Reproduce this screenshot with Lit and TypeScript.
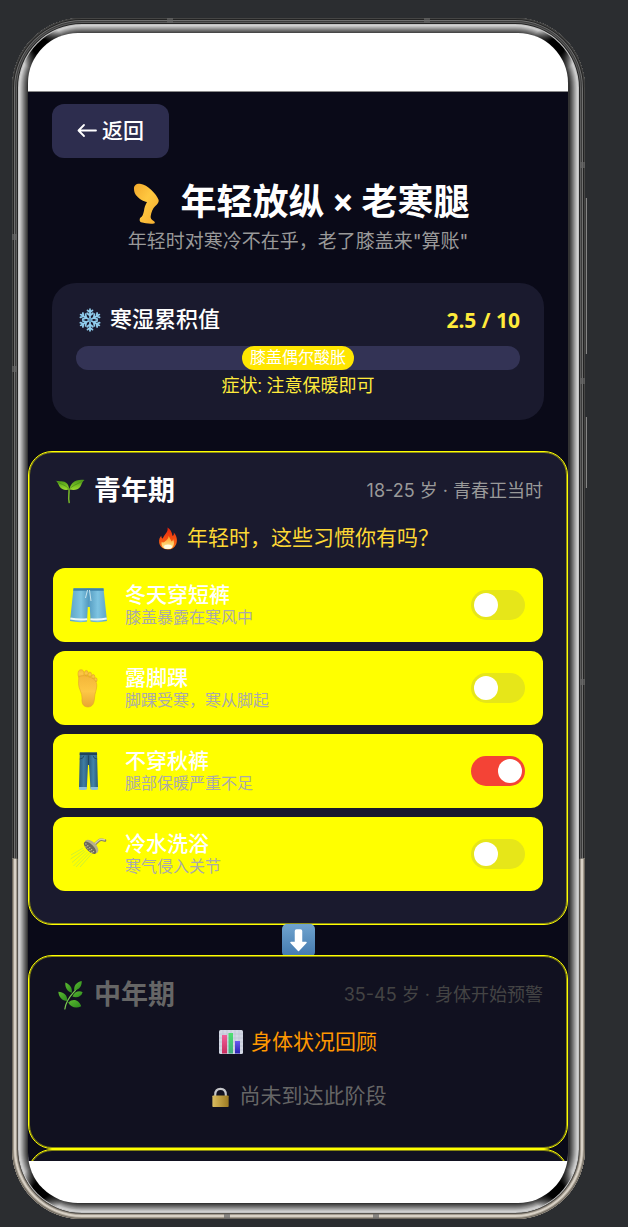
import { LitElement, html, css, svg } from "lit";
import { customElement, property, state } from "lit/decorators.js";

/* ---------- Pictograms ---------- */

const leg = svg`
  <svg class="i-leg" viewBox="18 33 138 126" aria-hidden="true">
    <defs><linearGradient id="lg" x1="0" y1="0" x2="1" y2="1"><stop offset="0" stop-color="#f3a92c"/><stop offset=".45" stop-color="#ffc840"/><stop offset="1" stop-color="#f5ac2f"/></linearGradient></defs>
    <path fill="url(#lg)" d="M42 54C41 43 49 37 60 38C72 39 84 47 94 57C104 67 113 78 116 87C117 94 112 100 106 105C98 112 94 124 92 136C91 143 95 146 101 150C106 153 106 158 99 158C88 159 74 157 63 154C58 152 58 143 61 140C67 137 70 129 72 119C73 110 76 102 81 93C71 92 58 84 51 76C45 70 42 62 42 54Z"/>
  </svg>`;

const snow = svg`
  <svg class="i-snow" viewBox="0 0 24 26" aria-hidden="true">
    <g fill="none" stroke="#8fcdec" stroke-width="1.900" stroke-linecap="round">
      ${[0, 60, 120, 180, 240, 300].map(
        (a) => svg`<path transform="rotate(${a} 12 13)" d="M12 11V1.300M12 4.800L9.300 2.500M12 4.800L14.700 2.500M12 8.300L8.900 5.700M12 8.300L15.100 5.700"/>`
      )}
    </g>
    <circle cx="12" cy="13" r="1.600" fill="#5c9fc4"/>
  </svg>`;

const sprout = svg`
  <svg class="i-head" viewBox="0 0 30 28" aria-hidden="true">
    <defs><linearGradient id="sp" x1="0" y1="0" x2="0" y2="1"><stop offset="0" stop-color="#4b9618"/><stop offset="1" stop-color="#9bdb2e"/></linearGradient></defs>
    <path fill="none" stroke="#78b92a" stroke-width="1.500" stroke-linecap="round" d="M14 12C14.500 17 12.800 20 14.200 25.500"/>
    <path fill="url(#sp)" d="M.5 3.500C4 5 9 3 12 6.500C13.500 8.300 14 10 14 12.500C10 13.500 6.500 12.500 4.500 9.500C3 7 3 5 .5 3.500Z"/>
    <path fill="url(#sp)" d="M29.500 3C25 2.500 20.500 3 17.500 6C15.800 7.800 14.800 10 14.500 12.500C19 13.500 23 13 25.300 9.800C26.800 7.500 27 4.500 29.500 3Z"/>
    <path fill="none" stroke="#3c8513" stroke-width=".6" d="M3 5.500C7 7.500 11 8 14 12.500C17 8.500 21.500 7.500 27 4.500"/>
  </svg>`;

const herb = svg`
  <svg class="i-head" viewBox="0 0 30 30" aria-hidden="true">
    <defs><linearGradient id="hb" x1="0" y1="0" x2="1" y2="1"><stop offset="0" stop-color="#5dbb32"/><stop offset="1" stop-color="#2b8a1c"/></linearGradient></defs>
    <path fill="none" stroke="#7ccb52" stroke-width="1.300" stroke-linecap="round" d="M9.500 30C10.500 23 14 17.500 19 12C21 9.500 23 7.500 25.500 3"/>
    <g fill="url(#hb)">
      <path d="M2.500 11.500C8 12 12.500 15 12 21.500C6.500 21 3 17.500 2.500 11.500Z"/>
      <path d="M10 1.500C15 3.500 17.500 7 17 12.500C12.500 11.500 9.500 7 10 1.500Z"/>
      <path d="M27.500 0C28 5 25 9.500 19.500 10C19 5 22 1 27.500 0Z"/>
      <path d="M28.500 12C25 9.500 19.500 11.500 17.500 16.500C22 18.500 27 17 28.500 12Z"/>
      <path d="M27 27C25 21 19 17.500 13 23C16 28.500 22 30 27 27Z"/>
    </g>
  </svg>`;

const flame = svg`
  <svg class="i-small" viewBox="0 0 22 24" aria-hidden="true">
    <defs>
      <linearGradient id="f1" x1="0" y1="0" x2="0" y2="1"><stop offset="0" stop-color="#e6230c"/><stop offset="1" stop-color="#ff7a18"/></linearGradient>
      <linearGradient id="f2" x1="0" y1="0" x2="0" y2="1"><stop offset="0" stop-color="#ff9a1f"/><stop offset="1" stop-color="#fff3a0"/></linearGradient>
    </defs>
    <path fill="url(#f1)" d="M10.500 .5C14.500 3 15.200 6.500 15.800 9.500C17 9 17.300 7.500 17 5.800C20 9 21.300 14 19.500 18C18 21.800 14.800 23.500 11 23.500C6.500 23.500 2.500 21 1.800 16.500C1.300 13 2.500 10.500 4 9C4 10.500 4.500 11.500 5.500 12C7 8 11.500 5.500 10.500 .5Z"/>
    <path fill="url(#f2)" d="M11.500 9.500C13 11.500 13.500 13 14.800 15C15.800 14.500 16.300 13.500 16.300 12.500C17.800 15.500 17.500 18.500 15.800 21C12.500 23.800 8 23.500 5.500 21C4 19 4 17 4.500 15.500C5.500 16.500 6.500 16 7.500 15.500C9 14 11.500 13 11.500 9.500Z"/>
    <ellipse cx="11" cy="20.500" rx="4.200" ry="2.300" fill="#fffbe0"/>
  </svg>`;

const chart = svg`
  <svg class="i-text" viewBox="0 0 24 24" aria-hidden="true">
    <defs>
      <linearGradient id="c1" x1="0" y1="0" x2="0" y2="1"><stop offset="0" stop-color="#f0609b"/><stop offset="1" stop-color="#c82c5c"/></linearGradient>
      <linearGradient id="c2" x1="0" y1="0" x2="0" y2="1"><stop offset="0" stop-color="#4fe070"/><stop offset="1" stop-color="#3fae7c"/></linearGradient>
      <linearGradient id="c3" x1="0" y1="0" x2="0" y2="1"><stop offset="0" stop-color="#6a5af0"/><stop offset="1" stop-color="#2a22b0"/></linearGradient>
    </defs>
    <rect width="24" height="24" rx="1.500" fill="#d3d8e4"/>
    <path stroke="#b9c1d2" stroke-width=".6" d="M0 4H24M0 8H24M0 12H24M0 16H24M0 20H24M4 0V24M8 0V24M12 0V24M16 0V24M20 0V24"/>
    <rect x="3" y="5" width="5" height="18.500" fill="url(#c1)"/><rect x="9.500" y="3" width="4.500" height="20.500" fill="url(#c2)"/><rect x="16" y="11" width="5" height="12.500" fill="url(#c3)"/>
  </svg>`;

const lock = svg`
  <svg class="i-small" viewBox="0 0 22 24" aria-hidden="true">
    <defs><linearGradient id="lk"><stop offset="0" stop-color="#d9bd62"/><stop offset=".3" stop-color="#c9a94b"/><stop offset="1" stop-color="#9c7a22"/></linearGradient></defs>
    <path fill="none" stroke="#c5c6c9" stroke-width="2.200" d="M5 13V10C5 6 7 4 10.500 4S16 6 16 10V13"/>
    <rect x="2" y="11" width="17" height="12" rx=".8" fill="url(#lk)"/>
  </svg>`;

const shorts = svg`
  <svg viewBox="0 0 36 36" aria-hidden="true">
    <defs><linearGradient id="sh"><stop offset="0" stop-color="#5fa6c6"/><stop offset=".3" stop-color="#7ec4e2"/><stop offset=".5" stop-color="#559bc0"/><stop offset=".75" stop-color="#7ec4e2"/><stop offset="1" stop-color="#5fa6c6"/></linearGradient></defs>
    <path fill="url(#sh)" d="M2.500 1.500H32.500L36 34Q28 36 19.500 34.500L18.800 20L16.800 20L16 34.500Q8 36 -1 34Z"/>
    <path fill="#3f83aa" d="M2.500 1.200H32.500L32.800 3.700H2.200Z"/>
    <path fill="none" stroke="#eef8f4" stroke-width="2" d="M-.7 31.500Q8 33.300 16.200 32.200M19.400 32.200Q28 33.300 35.700 31.500"/>
    <path fill="none" stroke="#d4ecf2" stroke-width=".9" d="M16.500 3L14.500 11M18.500 3L20 14"/>
  </svg>`;

const foot = svg`
  <svg viewBox="0 0 36 36" aria-hidden="true">
    <defs><linearGradient id="ft" x1="0" y1="0" x2="0" y2="1"><stop offset="0" stop-color="#f4b63a"/><stop offset=".5" stop-color="#fdc746"/><stop offset="1" stop-color="#e8a632"/></linearGradient></defs>
    <g fill="url(#ft)" stroke="#dc9a2a" stroke-width=".5">
      <ellipse cx="10" cy="4" rx="3" ry="4.300"/><ellipse cx="15.300" cy="3.400" rx="1.900" ry="3"/><ellipse cx="18.900" cy="4.700" rx="1.700" ry="2.700"/><ellipse cx="22.200" cy="6.800" rx="1.600" ry="2.400"/><ellipse cx="24.700" cy="9.800" rx="1.400" ry="2.100"/>
      <path d="M7.800 7C10 5.500 14 5 18 7C22 8 26 10.500 25.800 16C25.500 20.500 23.800 23 23.500 28C23.300 33 21.500 37 17 37C12 37 10.500 33 11 28.500C11.500 23 7.500 19 7.500 13.500Z"/>
    </g>
  </svg>`;

const jeans = svg`
  <svg viewBox="0 0 36 36" aria-hidden="true">
    <defs><linearGradient id="jn"><stop offset="0" stop-color="#2b5b7b"/><stop offset=".25" stop-color="#3f7da3"/><stop offset=".5" stop-color="#2b5b7b"/><stop offset=".75" stop-color="#4384aa"/><stop offset="1" stop-color="#2b5b7b"/></linearGradient></defs>
    <path fill="url(#jn)" d="M8.800 -.5H26L27 35.500H19.500L18 12H17L15.800 35.500H8Z"/>
    <path fill="#1f435d" d="M8.800 -.5H26L26.100 2H8.700Z"/>
    <path fill="#8ec0d8" d="M8 34H15.900L15.800 36.500Q12 37.500 8 36.500ZM19.400 34H27V36.500Q23 37.500 19.500 36.500Z"/>
    <path fill="none" stroke="#1f435d" stroke-width=".8" d="M8.700 6Q12.500 6 13 2.500M26.200 6Q22.500 6 22 2.500M17.500 2.500V12"/>
  </svg>`;

const shower = svg`
  <svg viewBox="0 0 36 36" aria-hidden="true">
    <path fill="none" stroke="#c2ec3c" stroke-width=".8" d="M12 12L0 19M13 14L-.5 23M14.500 15L1 26.500M16.500 16L2.500 30M18.500 17L5 31M20.500 18L9 31"/>
    <path fill="none" stroke="#857f60" stroke-width="2.600" stroke-linecap="round" stroke-linejoin="round" d="M22.500 9.500L28 4.500Q29.500 3 34 4.500"/>
    <path fill="none" stroke="#d5cfae" stroke-width="1.500" stroke-linecap="round" d="M23 8.500L28 4Q29.500 2.600 33.500 3.800"/>
    <ellipse cx="20.500" cy="10.500" rx="8.500" ry="4.600" transform="rotate(45 20.500 10.500)" fill="#b5af8c"/>
    <ellipse cx="19" cy="11.800" rx="8" ry="3.500" transform="rotate(45 19 11.800)" fill="#6b685a"/>
    <path stroke="#c9c49c" stroke-width="1.200" stroke-dasharray="1.200 1.500" d="M14.500 7.500L24 17M14.500 10.500L21.500 17"/>
  </svg>`;

const downArrow = svg`
  <svg class="i-arrow" viewBox="0 0 33 33" aria-hidden="true">
    <defs><linearGradient id="ar" x1="0" y1="0" x2="0" y2="1"><stop offset="0" stop-color="#70a4cf"/><stop offset="1" stop-color="#4379ae"/></linearGradient></defs>
    <rect width="33" height="33" rx="5" fill="url(#ar)"/>
    <path fill="#fff" stroke="#fff" stroke-width="1.500" stroke-linejoin="round" d="M13.500 7Q13.500 6 14.500 6H18.500Q19.500 6 19.500 7V18.500H24L16.500 26.500L9 18.500H13.500Z"/>
  </svg>`;

/* ---------- Habit row with its switch ---------- */

@customElement("habit-row")
class HabitRow extends LitElement {
  @property() name = "";
  @property() note = "";
  @property({ attribute: false }) icon: unknown;
  @property({ type: Boolean }) on = false;

  static styles = css`
    :host { display: block; }
    .row {
      display: flex; align-items: center; gap: 18px;
      padding: 15px 18px; border-radius: 12px; background: #ffff00; cursor: pointer;
    }
    .icon { flex: none; width: 36px; height: 36px; }
    .icon svg { display: block; width: 100%; height: 100%; overflow: visible; }
    .copy { flex: 1; min-width: 0; display: flex; flex-direction: column; }
    .name { font-size: 21px; line-height: 25px; font-weight: 500; color: #fff; }
    .note { font-size: 16px; line-height: 19px; color: #aaa; }
    .toggle {
      appearance: none; flex: none; box-sizing: border-box; margin: 0;
      width: 54px; height: 30px; padding: 3px; border-radius: 15px;
      background: #e6e619; display: flex; cursor: pointer;
    }
    .toggle::before { content: ""; width: 24px; height: 24px; border-radius: 50%; background: #fff; }
    .toggle:checked { background: #f44336; justify-content: flex-end; }
  `;

  render() {
    return html`<label class="row">
      <span class="icon">${this.icon}</span>
      <span class="copy"><span class="name">${this.name}</span><span class="note">${this.note}</span></span>
      <input class="toggle" type="checkbox" role="switch" .checked=${this.on}
        @change=${(e: Event) => (this.on = (e.target as HTMLInputElement).checked)} />
    </label>`;
  }
}

/* ---------- App ---------- */

@customElement("app-root")
class AppRoot extends LitElement {
  @state() habits = [
    { name: "冬天穿短裤", note: "膝盖暴露在寒风中", icon: shorts, on: false },
    { name: "露脚踝", note: "脚踝受寒，寒从脚起", icon: foot, on: false },
    { name: "不穿秋裤", note: "腿部保暖严重不足", icon: jeans, on: true },
    { name: "冷水洗浴", note: "寒气侵入关节", icon: shower, on: false },
  ];

  static styles = css`
    :host {
      display: block; box-sizing: border-box; height: 100vh;
      padding: 18px 43px 8px 12px; background: #2b2d30; color: #fff;
      font-family: Roboto, "Noto Sans CJK SC", sans-serif;
    }
    * { box-sizing: border-box; }
    h1, h2, p { margin: 0; }
    svg { overflow: visible; flex: none; }

    .phone {
      position: relative; height: 100%; padding: 15px 17px 16px 16px;
      border-radius: 70px; background: #333;
      box-shadow:
        inset 0 0 0 1px #464645, inset 0 0 0 2px #232323, inset 0 0 0 3px #707070,
        inset 0 0 0 4px #3c3c3c, inset 0 0 0 5px #5c5c5c, inset 0 0 0 6px #242424,
        inset 0 0 0 7px #c4c4c4, inset 0 0 0 8px #d0d0d0, inset 0 0 0 9px #c0c0c0,
        inset 0 0 0 10px #acacac, inset 0 0 0 11px #989898, inset 0 0 0 12px #828282,
        inset 0 0 0 13px #6e6e6e, inset 0 0 0 14px #5a5a5a, inset 0 0 0 15px #484848;
    }
    .phone::before {
      content: ""; position: absolute; inset: 0; border-radius: 70px;
      clip-path: inset(70% 0 0 0);
      box-shadow: inset 0 0 0 1px #6d675e, inset 0 0 0 2px #a39b8e, inset 0 0 0 4px #d8d1c6,
        inset 0 0 0 5px #a39b8f, inset 0 0 0 6px #59554f;
    }
    .phone::after {
      content: ""; position: absolute; inset: 7px; border-radius: 63px;
      background:
        radial-gradient(circle 24px at 22px 22px, #000 35%, transparent),
        radial-gradient(circle 24px at calc(100% - 22px) 22px, #000 35%, transparent),
        radial-gradient(circle 24px at 22px calc(100% - 22px), #000 35%, transparent),
        radial-gradient(circle 24px at calc(100% - 22px) calc(100% - 22px), #000 35%, transparent);
    }
    .key { position: absolute; left: 100%; width: 2px; border-right: 1px solid #858585; background: #3a3a3a; }
    .power { top: 180px; height: 156px; }
    .volume { top: 399px; height: 71px; }
    .mark { position: absolute; background: #666; opacity: 0.7; }
    .mark.h { width: 6px; height: 5px; }
    .mark.v { width: 5px; height: 6px; }
    .t { top: 0; } .b { bottom: 0; } .l { left: 0; } .r { right: 0; }
    .h1 { left: 27%; } .h2 { right: 27%; } .h3 { left: 37%; } .h4 { right: 36%; }
    .v1 { top: 12%; } .v2 { top: 18%; } .v3 { top: 29%; } .v4 { top: 30%; } .v5 { top: 55%; }

    .screen {
      position: relative; z-index: 1; height: 100%; overflow: hidden;
      display: flex; flex-direction: column; border-radius: 50px; background: #fff;
    }
    .status { flex: none; height: 59px; border-bottom: 1px solid #8a8a8a; }
    .gesture { flex: none; height: 42px; }
    .content {
      flex: 1; min-height: 0; overflow-y: auto; scrollbar-width: none;
      background: #0a0a18;
    }

    .top { padding: 12px 24px 31px; }
    .back {
      display: block; height: 54px; padding: 0 25px; border: 0; border-radius: 12px;
      background: #2d2d4e; color: #fff; font: 500 21px/54px Roboto, "Noto Sans CJK SC", sans-serif;
      cursor: pointer;
    }
    .back span { display: flex; align-items: center; gap: 5px; }
    .title {
      display: flex; justify-content: center; align-items: center; gap: 8px;
      margin-top: 24px; font-size: 36px; line-height: 42px; font-weight: 700; white-space: nowrap;
    }
    .subtitle {
      text-align: center; font-family: Inter, "Noto Sans CJK SC", sans-serif;
      font-size: 19px; line-height: 35px; color: #999;
    }

    .card { margin-top: 24px; padding: 24px 24px 18px; border-radius: 24px; background: #1a1a2e; }
    .meter-head { display: flex; align-items: center; justify-content: space-between; line-height: 26px; }
    .meter-name { display: flex; align-items: center; gap: 6px; font-size: 22px; font-weight: 500; }
    .meter-value { font: 700 21px/26px "Noto Sans", sans-serif; color: #ffeb3b; }
    .meter {
      display: flex; justify-content: center; height: 24px; margin-top: 13px;
      border-radius: 12px; background: #333355;
    }
    .pill { padding: 0 8px; border-radius: 12px; background: #ffe600; font-size: 16px; line-height: 24px; }
    .symptom { text-align: center; font-size: 18px; line-height: 32px; color: #ffeb3b; }

    .stage {
      position: relative; padding: 23px 24px 33px; border: 1px solid #ffff00;
      outline: 1px solid #ffff0080; outline-offset: -2px;
      border-radius: 24px; background: #1a1a2e;
    }
    .stage-head { display: flex; align-items: center; justify-content: space-between; line-height: 32px; }
    .stage-name { display: flex; align-items: center; gap: 7px; font-size: 27px; line-height: 32px; font-weight: 700; }
    .stage-age { font-family: Inter, "Noto Sans CJK SC", sans-serif; font-size: 18px; color: #999; }
    .prompt {
      display: flex; justify-content: center; align-items: center; gap: 8px;
      margin-top: 16px; font-size: 21px; line-height: 30px; color: #fdd835;
    }
    .habits { display: flex; flex-direction: column; gap: 9px; margin-top: 15px; }
    .link { display: flex; justify-content: center; align-items: center; height: 30px; position: relative; z-index: 1; }
    .stage.locked { z-index: 2; padding-bottom: 37px; background: #111120; }
    .locked .stage-name, .notice { color: #666; }
    .locked .stage-age { color: #444; }
    .locked .prompt { color: #ff9800; }
    .notice {
      display: flex; justify-content: center; align-items: center; gap: 8px;
      margin-top: 24px; font-size: 21px; line-height: 30px;
    }

    .i-leg { width: 46px; height: 42px; }
    .i-snow { width: 28px; height: 24px; }
    .i-text { width: 24px; height: 24px; }
    .i-small { width: 22px; height: 23px; }
    .i-head { width: 34px; height: 28px; }
    .i-arrow { width: 33px; height: 33px; }
    .i-back { width: 20px; height: 16px; }
  `;

  render() {
    return html`
      <div class="phone">
        <i class="mark h t h1"></i><i class="mark h t h2"></i>
        <i class="mark h b h3"></i><i class="mark h b h4"></i>
        <i class="mark v l v2"></i><i class="mark v l v3"></i>
        <i class="mark v r v1"></i><i class="mark v r v4"></i><i class="mark v r v5"></i>
        <i class="key power"></i><i class="key volume"></i>
        <div class="screen">
          <div class="status"></div>
          <main class="content">
            <header class="top">
              <button class="back" type="button"><span>
                <svg class="i-back" viewBox="0 0 20 16" aria-hidden="true"><path fill="none" stroke="#fff" stroke-width="1.800" stroke-linecap="round" stroke-linejoin="round" d="M7 2L1.500 7.500L7 13M2 7.500H19"/></svg>返回</span></button>
              <h1 class="title">${leg}<span>年轻放纵 × 老寒腿</span></h1>
              <p class="subtitle">年轻时对寒冷不在乎，老了膝盖来"算账"</p>
              <section class="card">
                <div class="meter-head">
                  <span class="meter-name">${snow}寒湿累积值</span>
                  <span class="meter-value">2.5 / 10</span>
                </div>
                <div class="meter"><span class="pill">膝盖偶尔酸胀</span></div>
                <p class="symptom">症状: 注意保暖即可</p>
              </section>
            </header>

            <section class="stage">
              <div class="stage-head">
                <h2 class="stage-name">${sprout}青年期</h2>
                <span class="stage-age">18-25 岁 · 青春正当时</span>
              </div>
              <p class="prompt">${flame}<span>年轻时，这些习惯你有吗？</span></p>
              <div class="habits">
                ${this.habits.map(
                  (h) => html`<habit-row .name=${h.name} .note=${h.note} .icon=${h.icon} .on=${h.on}></habit-row>`
                )}
              </div>
            </section>

            <div class="link">${downArrow}</div>

            <section class="stage locked">
              <div class="stage-head">
                <h2 class="stage-name">${herb}中年期</h2>
                <span class="stage-age">35-45 岁 · 身体开始预警</span>
              </div>
              <p class="prompt">${chart}<span>身体状况回顾</span></p>
              <p class="notice">${lock}<span>尚未到达此阶段</span></p>
            </section>

            <section class="stage locked"></section>
          </main>
          <div class="gesture"></div>
        </div>
      </div>
    `;
  }
}
